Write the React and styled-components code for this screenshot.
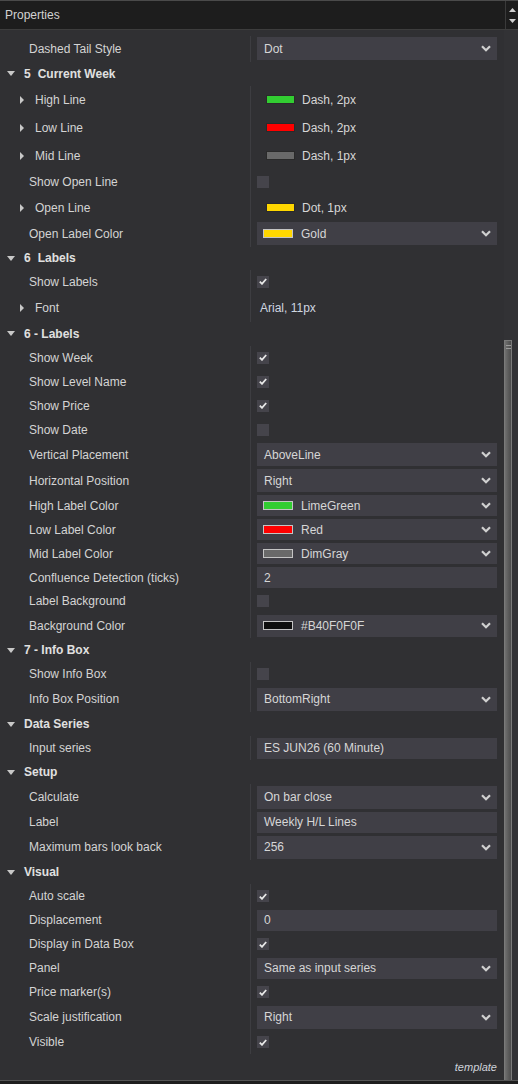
import React from 'react';
import styled, { createGlobalStyle } from 'styled-components';

const GlobalStyle = createGlobalStyle`
  html, body {
    margin: 0;
    padding: 0;
    background: #1b1b1b;
  }
  body {
    font-family: 'Liberation Sans', Arial, sans-serif;
    font-size: 12px;
  }
`;

const Panel = styled.div`
  width: 518px;
  height: 1084px;
  display: flex;
  flex-direction: column;
  background: #303033;
  border-top: 1px solid #4a4a4a;
  box-sizing: border-box;
  overflow: hidden;
`;

const Header = styled.div`
  height: 28px;
  display: flex;
  align-items: center;
  background: #1d1d1d;
  border-bottom: 1px solid #3d3d3d;
  flex-shrink: 0;
`;

const HeaderTitle = styled.div`
  flex: 1;
  padding-left: 5px;
  color: #d2d2d2;
  font-size: 12px;
`;

const HeaderArrows = styled.div`
  width: 13px;
  height: 100%;
  border-left: 1px solid #3a3a3a;
  display: flex;
  flex-direction: column;
  align-items: center;
  justify-content: space-around;
  padding: 3px 0;
  box-sizing: border-box;
`;

const Body = styled.div`
  flex: 1;
  display: flex;
  min-height: 0;
`;

const Content = styled.div`
  flex: 1;
  padding-top: 6px;
  display: flex;
  flex-direction: column;
`;

const Track = styled.div`
  width: 14px;
  display: flex;
  flex-direction: column;
  background: #323235;
`;

const Thumb = styled.div`
  width: 8px;
  flex: 1;
  background: linear-gradient(to right, #707070, #5a5a5a 60%, #4c4c4c);
  border: 1px solid #7a7a7a;
  border-bottom: none;
  box-sizing: border-box;
  display: flex;
  flex-direction: column;
  align-items: flex-end;
  gap: 2px;
  padding-top: 4px;
`;

const Grip = styled.span`
  display: block;
  width: 5px;
  height: 1px;
  background: #9a9a9a;
`;

const Row = styled.div`
  display: flex;
  height: ${p => p.h}px;
  align-items: stretch;
`;

const NameCell = styled.div`
  width: 250px;
  flex-shrink: 0;
  display: flex;
  align-items: center;
  padding-left: ${p => p.indent}px;
  box-sizing: border-box;
  color: #d4d4d4;
  white-space: nowrap;
`;

const CategoryName = styled.div`
  display: flex;
  align-items: center;
  padding-left: 7px;
  color: #e0e0e0;
  font-weight: bold;
  white-space: nowrap;
`;

const ValueCell = styled.div`
  flex: 1;
  display: flex;
  align-items: center;
  border-left: 1px solid #3d3d41;
  padding-left: 6px;
  padding-right: 7px;
  min-width: 0;
`;

const Box = styled.div`
  flex: 1;
  height: ${p => p.h}px;
  background: #403f46;
  display: flex;
  align-items: center;
  padding-left: ${p => (p.swatch ? 6 : 7)}px;
  padding-right: 6px;
  color: #d6d6d6;
  box-sizing: border-box;
`;

const BoxText = styled.span`
  flex: 1;
`;

const Swatch = styled.span`
  box-sizing: border-box;
  width: ${p => p.w}px;
  height: 9px;
  background: ${p => p.color};
  border: 1px solid ${p => p.border};
  margin-right: ${p => p.gap}px;
  flex-shrink: 0;
`;

const PlainValue = styled.div`
  display: flex;
  align-items: center;
  color: ${p => (p.blue ? '#cfd6e0' : '#d6d6d6')};
  padding-left: ${p => p.pad}px;
`;

const CheckBox = styled.div`
  width: 12px;
  height: 12px;
  background: #45444b;
  display: flex;
  align-items: center;
  justify-content: center;
`;

const Footer = styled.div`
  height: 26px;
  display: flex;
  align-items: center;
  justify-content: flex-end;
  padding-right: 7px;
  color: #cfd3da;
  font-style: italic;
  font-size: 11px;
`;

const BottomLine = styled.div`
  border-top: 1px solid #555;
  flex: 0 0 3px;
  background: #1e1e1e;
`;

const Spacer = styled.div`
  height: ${p => p.h}px;
  flex-shrink: 0;
`;

const Num = styled.span`
  margin-right: 7px;
`;

const Chevron = () => (
  <svg width="10" height="7" viewBox="0 0 10 7">
    <path d="M1 1.2 L5 5.2 L9 1.2" fill="none" stroke="#d0d0d0" strokeWidth="2.2" />
  </svg>
);

const DownTri = () => (
  <svg width="8" height="5" viewBox="0 0 8 5" style={{ marginRight: 9 }}>
    <path d="M0 0 L8 0 L4 5 Z" fill="#c8c8c8" />
  </svg>
);

const RightTri = () => (
  <svg width="4" height="8" viewBox="0 0 4 8" style={{ marginRight: 11 }}>
    <path d="M0 0 L4 4 L0 8 Z" fill="#c8c8c8" />
  </svg>
);

const Check = () => (
  <svg width="8" height="7" viewBox="0 0 8 7">
    <path d="M0.8 3.6 L3 5.8 L7.2 1" fill="none" stroke="#e8e8e8" strokeWidth="1.8" />
  </svg>
);

const rows = [
  { t: 'prop', name: 'Dashed Tail Style', h: 26, v: { k: 'drop', text: 'Dot' } },
  { t: 'cat', num: '5', name: 'Current Week', h: 24 },
  { t: 'prop', name: 'High Line', h: 28, expand: true, v: { k: 'line', color: '#32cd32', text: 'Dash, 2px' } },
  { t: 'prop', name: 'Low Line', h: 28, expand: true, v: { k: 'line', color: '#ff0000', text: 'Dash, 2px' } },
  { t: 'prop', name: 'Mid Line', h: 28, expand: true, v: { k: 'line', color: '#696969', text: 'Dash, 1px' } },
  { t: 'prop', name: 'Show Open Line', h: 25, v: { k: 'check', on: false } },
  { t: 'prop', name: 'Open Line', h: 26, expand: true, v: { k: 'line', color: '#ffd700', text: 'Dot, 1px' } },
  { t: 'prop', name: 'Open Label Color', h: 26, v: { k: 'drop', color: '#ffd700', text: 'Gold' } },
  { t: 'cat', num: '6', name: 'Labels', h: 23 },
  { t: 'prop', name: 'Show Labels', h: 24, v: { k: 'check', on: true } },
  { t: 'prop', name: 'Font', h: 28, expand: true, v: { k: 'plain', text: 'Arial, 11px' } },
  { t: 'cat', name: '6 - Labels', h: 24 },
  { t: 'prop', name: 'Show Week', h: 24, v: { k: 'check', on: true } },
  { t: 'prop', name: 'Show Level Name', h: 24, v: { k: 'check', on: true } },
  { t: 'prop', name: 'Show Price', h: 24, v: { k: 'check', on: true } },
  { t: 'prop', name: 'Show Date', h: 24, v: { k: 'check', on: false } },
  { t: 'prop', name: 'Vertical Placement', h: 26, v: { k: 'drop', text: 'AboveLine' } },
  { t: 'prop', name: 'Horizontal Position', h: 26, v: { k: 'drop', text: 'Right' } },
  { t: 'prop', name: 'High Label Color', h: 24, v: { k: 'drop', color: '#32cd32', text: 'LimeGreen' } },
  { t: 'prop', name: 'Low Label Color', h: 24, v: { k: 'drop', color: '#ff0000', text: 'Red' } },
  { t: 'prop', name: 'Mid Label Color', h: 24, v: { k: 'drop', color: '#696969', text: 'DimGray' } },
  { t: 'prop', name: 'Confluence Detection (ticks)', h: 24, v: { k: 'input', text: '2' } },
  { t: 'prop', name: 'Label Background', h: 24, v: { k: 'check', on: false } },
  { t: 'prop', name: 'Background Color', h: 25, v: { k: 'drop', color: '#0f0f0f', text: '#B40F0F0F' } },
  { t: 'cat', name: '7 - Info Box', h: 24 },
  { t: 'prop', name: 'Show Info Box', h: 24, v: { k: 'check', on: false } },
  { t: 'prop', name: 'Info Box Position', h: 26, v: { k: 'drop', text: 'BottomRight' } },
  { t: 'cat', name: 'Data Series', h: 24 },
  { t: 'prop', name: 'Input series', h: 24, v: { k: 'input', text: 'ES JUN26 (60 Minute)' } },
  { t: 'cat', name: 'Setup', h: 24 },
  { t: 'prop', name: 'Calculate', h: 26, v: { k: 'drop', text: 'On bar close' } },
  { t: 'prop', name: 'Label', h: 24, v: { k: 'input', text: 'Weekly H/L Lines' } },
  { t: 'prop', name: 'Maximum bars look back', h: 26, v: { k: 'drop', text: '256' } },
  { t: 'cat', name: 'Visual', h: 24 },
  { t: 'prop', name: 'Auto scale', h: 24, v: { k: 'check', on: true } },
  { t: 'prop', name: 'Displacement', h: 24, v: { k: 'input', text: '0' } },
  { t: 'prop', name: 'Display in Data Box', h: 24, v: { k: 'check', on: true } },
  { t: 'prop', name: 'Panel', h: 24, v: { k: 'drop', text: 'Same as input series' } },
  { t: 'prop', name: 'Price marker(s)', h: 24, v: { k: 'check', on: true } },
  { t: 'prop', name: 'Scale justification', h: 26, v: { k: 'drop', text: 'Right' } },
  { t: 'prop', name: 'Visible', h: 24, v: { k: 'check', on: true } },
];

const Value = ({ v, h }) => {
  if (v.k === 'check') {
    return <CheckBox>{v.on && <Check />}</CheckBox>;
  }
  if (v.k === 'line') {
    return (
      <PlainValue pad={9}>
        <Swatch w={29} gap={7} color={v.color} border="#2a2a2a" />
        {v.text}
      </PlainValue>
    );
  }
  if (v.k === 'plain') {
    return <PlainValue pad={3} blue>{v.text}</PlainValue>;
  }
  return (
    <Box h={h - 3} swatch={!!v.color}>
      {v.color && <Swatch w={30} gap={8} color={v.color} border="#c4c4c4" />}
      <BoxText>{v.text}</BoxText>
      {v.k === 'drop' && <Chevron />}
    </Box>
  );
};

const App = () => (
  <>
    <GlobalStyle />
    <Panel>
      <Header>
        <HeaderTitle>Properties</HeaderTitle>
        <HeaderArrows>
          <svg width="7" height="4" viewBox="0 0 7 4"><path d="M0 4 L7 4 L3.5 0 Z" fill="#d0d0d0" /></svg>
          <svg width="7" height="4" viewBox="0 0 7 4"><path d="M0 0 L7 0 L3.5 4 Z" fill="#d0d0d0" /></svg>
        </HeaderArrows>
      </Header>
      <Body>
        <Content>
          {rows.map((r, i) =>
            r.t === 'cat' ? (
              <Row key={i} h={r.h}>
                <CategoryName>
                  <DownTri />
                  {r.num && <Num>{r.num}</Num>}
                  {r.name}
                </CategoryName>
              </Row>
            ) : (
              <Row key={i} h={r.h}>
                <NameCell indent={r.expand ? 20 : 29}>
                  {r.expand && <RightTri />}
                  {r.name}
                </NameCell>
                <ValueCell>
                  <Value v={r.v} h={r.h} />
                </ValueCell>
              </Row>
            )
          )}
          <Footer>template</Footer>
        </Content>
        <Track>
          <Spacer h={310} />
          <Thumb>
            <Grip />
            <Grip />
          </Thumb>
        </Track>
      </Body>
      <BottomLine />
    </Panel>
  </>
);

export default App;
